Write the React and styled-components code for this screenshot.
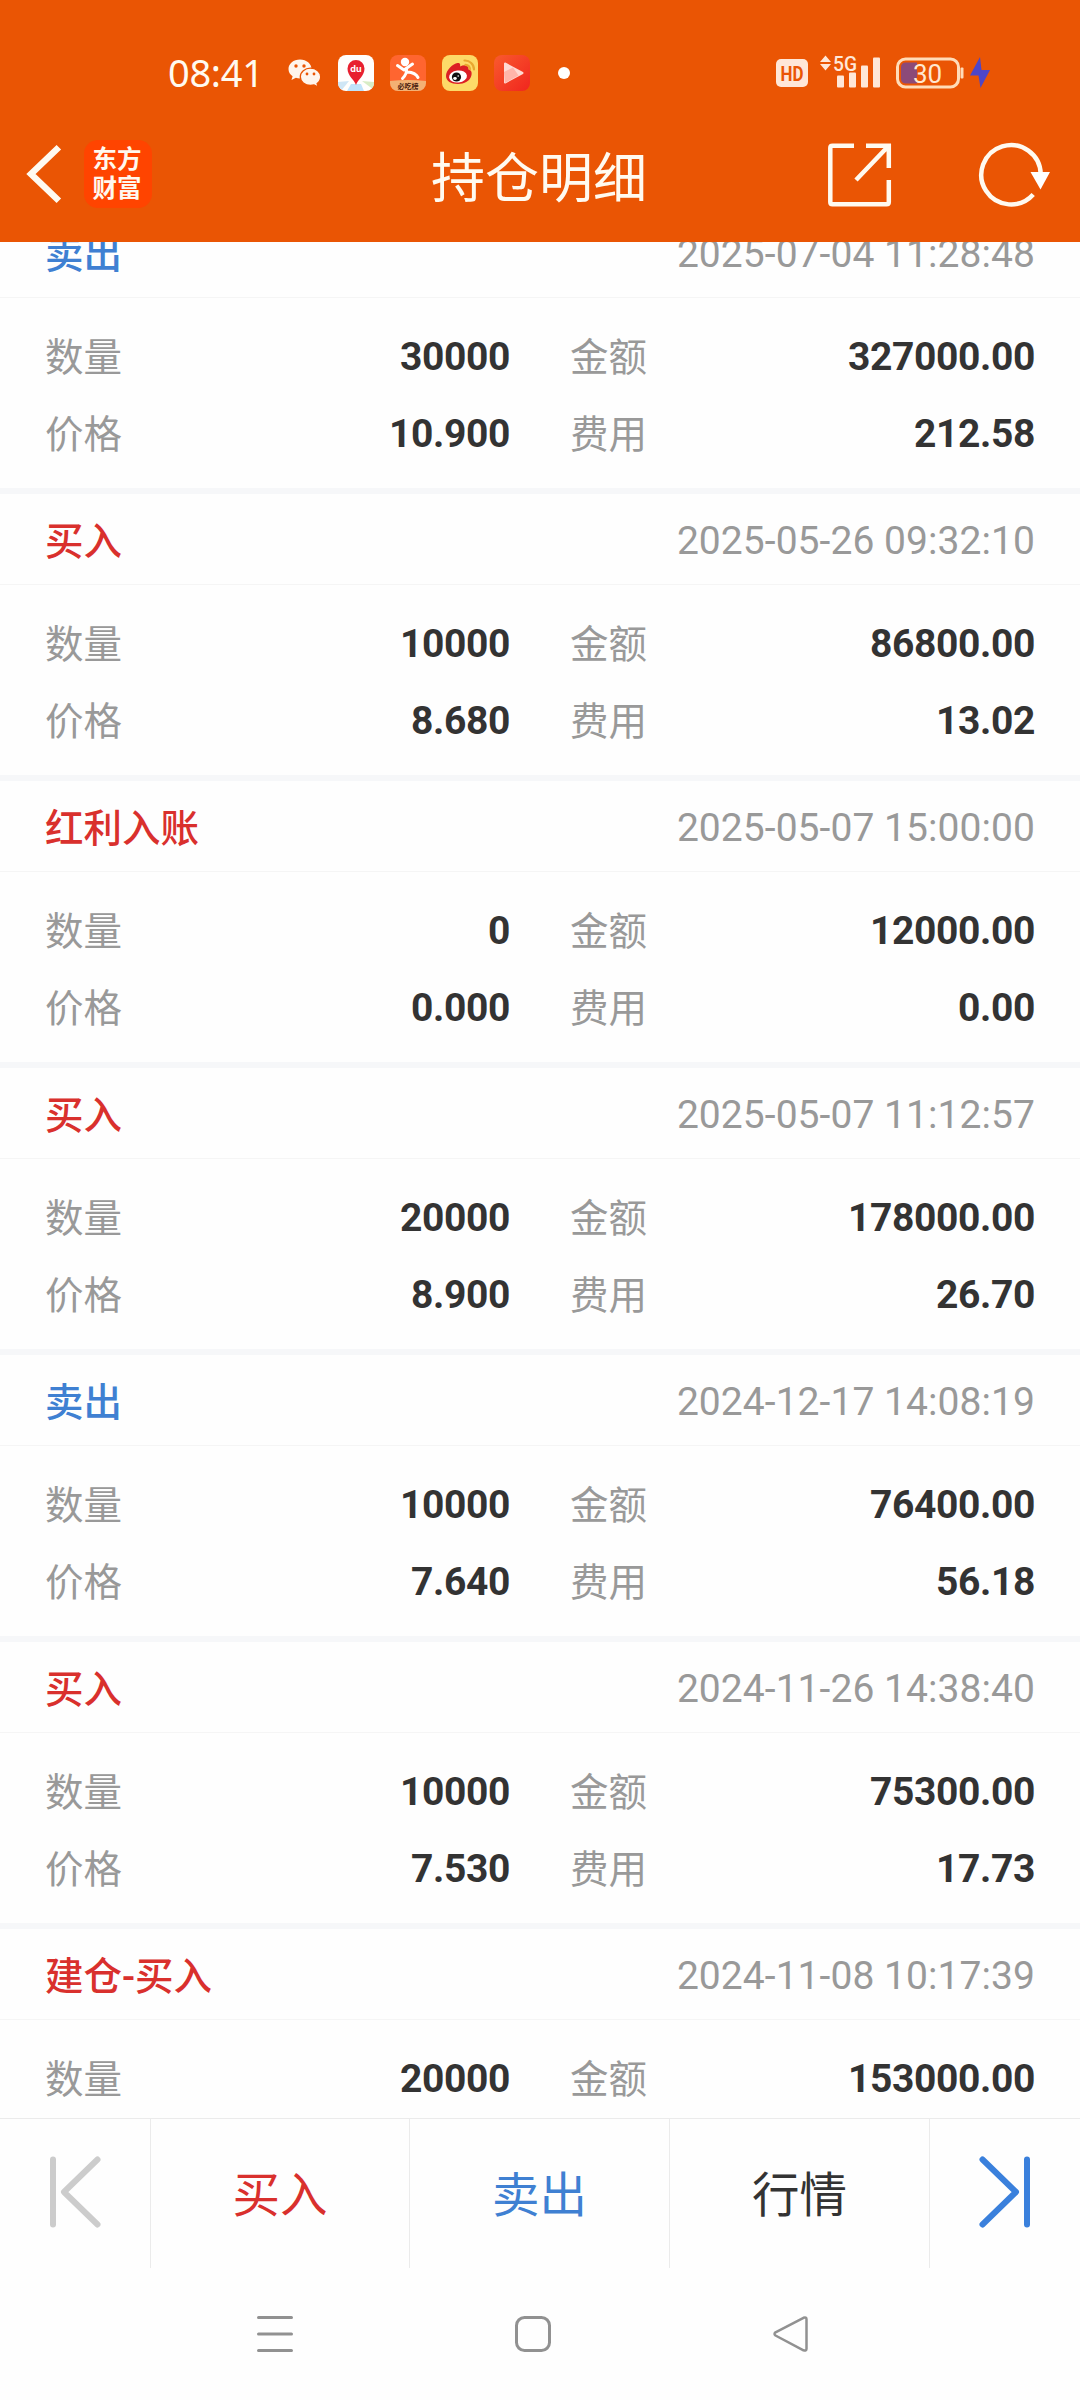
import React from 'react';
import styled, { createGlobalStyle } from 'styled-components';

const GlobalStyle = createGlobalStyle`
  body { margin: 0; background: #fefefe; }
  * { box-sizing: border-box; }
`;

const COLORS = { buy: '#d9302d', sell: '#3f80d2', text: '#333333', muted: '#999999' };

const Screen = styled.div`
  width: 1080px;
  height: 2400px;
  display: flex;
  flex-direction: column;
  overflow: hidden;
  background: #fefefe;
  font-family: Roboto, 'Noto Sans CJK SC', sans-serif;
`;

const Top = styled.header`
  flex: none;
  height: 242px;
  background: #ea5504;
  color: #fffaf0;
`;

const StatusBar = styled.div`
  height: 108px;
  padding: 37px 90px 0 168px;
  display: flex;
  justify-content: space-between;
`;

const StatusGroup = styled.div`
  display: flex;
  align-items: center;
  height: 71px;
  gap: ${(p) => p.$gap}px;
`;

const Clock = styled.span`
  width: 104px;
  padding-bottom: 1px;
  font: 400 38px/70px 'Noto Sans', sans-serif;
  letter-spacing: -0.3px;
`;

const DotWrap = styled.div`
  padding-left: 12px;
`;

const Spacer = styled.span`
  width: ${(p) => p.$w}px;
`;

const Icon = styled.svg`
  display: block;
  flex: none;
  overflow: visible;
`;

const TitleBar = styled.div`
  height: 134px;
  display: grid;
  grid-template-columns: 269px 1fr 271px;
  align-items: center;
`;

const Leading = styled.div`
  display: flex;
  align-items: center;
  gap: 24px;
  padding: 0 0 2px 26px;
`;

const Trailing = styled.div`
  display: flex;
  align-items: center;
  gap: 87px;
  padding: 0 0 1px 19px;
`;

const Logo = styled.div`
  width: 68px;
  height: 68px;
  padding: 3px 2px 0 0;
  border-radius: 14px;
  background: #ff4400;
  color: #fff8ee;
  text-align: center;
`;

const LogoLine = styled.div`
  height: 29px;
  font: 700 24.5px/29px 'Noto Sans CJK SC', sans-serif;
`;

const Title = styled.h1`
  margin: 0;
  padding-top: 10px;
  text-align: center;
  font-size: 54px;
  font-weight: 400;
  line-height: 80px;
`;

const List = styled.main`
  flex: none;
  height: 1876px;
  overflow: hidden;
`;

const Scrolled = styled.div`
  margin-top: -35px;
`;

const Card = styled.section`
  height: 287px;
  border-bottom: 6px solid #f6f7f9;
`;

const CardHead = styled.div`
  height: 91px;
  padding: 0 45px;
  display: flex;
  align-items: center;
  justify-content: space-between;
  border-bottom: 1px solid #f5f5f5;
  font-size: 39px;
`;

const Kind = styled.span`
  padding-bottom: 3px;
  color: ${(p) => COLORS[p.$tone]};
  font-size: 38.5px;
  font-weight: 500;
`;

const Time = styled.time`
  padding-top: 3px;
  color: ${COLORS.muted};
  letter-spacing: 0.06px;
`;

const Fields = styled.div`
  padding: 20px 45px 16px;
  display: grid;
  grid-template-columns: 465px 465px;
  column-gap: 60px;
  grid-auto-rows: 77px;
`;

const Field = styled.div`
  display: flex;
  align-items: center;
  justify-content: space-between;
  font-size: 39px;
`;

const Label = styled.span`
  padding-bottom: 6px;
  color: ${COLORS.muted};
  font-size: 38.5px;
  font-weight: 400;
`;

const Value = styled.span`
  color: ${COLORS.text};
  font-weight: 700;
  letter-spacing: -0.36px;
`;

const Actions = styled.nav`
  flex: none;
  height: 150px;
  display: grid;
  grid-template-columns: 151px 259px 260px 260px 150px;
  border-top: 1px solid #ebebeb;
`;

const Action = styled.div`
  display: flex;
  align-items: center;
  justify-content: center;
  padding-bottom: 4px;
  border-right: ${(p) => (p.$last ? 'none' : '1px solid #ebebeb')};
  color: ${(p) => COLORS[p.$tone]};
  font-size: 47.5px;
`;

const SystemNav = styled.footer`
  flex: 1;
  display: flex;
  justify-content: space-between;
  padding: 46px 271px 0 256px;
`;

const ACTIONS = [
  { text: '买入', tone: 'buy' },
  { text: '卖出', tone: 'sell' },
  { text: '行情', tone: 'text' },
];

const RECORDS = [
  ['卖出', 'sell', '2025-07-04 11:28:48', '30000', '327000.00', '10.900', '212.58'],
  ['买入', 'buy', '2025-05-26 09:32:10', '10000', '86800.00', '8.680', '13.02'],
  ['红利入账', 'buy', '2025-05-07 15:00:00', '0', '12000.00', '0.000', '0.00'],
  ['买入', 'buy', '2025-05-07 11:12:57', '20000', '178000.00', '8.900', '26.70'],
  ['卖出', 'sell', '2024-12-17 14:08:19', '10000', '76400.00', '7.640', '56.18'],
  ['买入', 'buy', '2024-11-26 14:38:40', '10000', '75300.00', '7.530', '17.73'],
  ['建仓-买入', 'buy', '2024-11-08 10:17:39', '20000', '153000.00'],
];
const LABELS = ['数量', '金额', '价格', '费用'];

function WeChat() {
  return (
    <Icon width="34" height="36" viewBox="0 0 34 36">
      <path d="M12 4.500C5.500 4.500 0.500 8.700 0.500 14c0 3 1.600 5.600 4.100 7.300L3.500 25l4.400-2.200c1.200.4 2.600.6 4.100.6 6.500 0 11.500-4.200 11.500-9.400S18.500 4.500 12 4.500z" fill="#fff5ec" />
      <path d="M22.500 13.200c-5.700 0-10.200 3.800-10.200 8.600s4.500 8.700 10.200 8.700c1.300 0 2.500-.2 3.600-.5l4 2-1-3.400c2.200-1.600 3.600-4 3.600-6.800 0-4.800-4.500-8.600-10.200-8.600z" fill="#fff5ec" stroke="#ea5504" strokeWidth="1.300" />
      <g fill="#ea5504">
        <circle cx="8" cy="11" r="1.700" /><circle cx="16" cy="11" r="1.700" />
        <circle cx="19" cy="19" r="1.400" /><circle cx="26" cy="19" r="1.400" />
      </g>
    </Icon>
  );
}

function MapPin() {
  return (
    <Icon width="36" height="36" viewBox="0 0 36 36">
      <clipPath id="mapClip"><rect width="36" height="36" rx="8" /></clipPath>
      <g clipPath="url(#mapClip)">
        <rect width="36" height="36" fill="#fffefc" />
        <path d="M0 27l11-1-8 10H0z" fill="#cfe6f5" />
        <path d="M13 29h10l3 7H9z" fill="#bfe3fa" />
        <path d="M24 26l12 1v8z" fill="#d7ecc5" />
      </g>
      <path d="M18 30C16.500 25 9.500 21 9.500 13.500a8.500 8.500 0 0 1 17 0C26.500 21 19.500 25 18 30z" fill="#e8202f" />
      <text x="18" y="17" textAnchor="middle" fill="#fff" fontFamily="Inter, sans-serif" fontWeight="700" fontSize="9">du</text>
    </Icon>
  );
}

function Review() {
  return (
    <Icon width="36" height="36" viewBox="0 0 36 36">
      <clipPath id="reviewClip"><rect width="36" height="36" rx="8" /></clipPath>
      <g clipPath="url(#reviewClip)">
        <rect width="36" height="36" fill="#ff6530" />
        <path d="M0 26q18-2 36 0v10H0z" fill="#f3b174" />
      </g>
      <circle cx="15" cy="7" r="4.200" fill="#fff" />
      <path d="M7.500 10.500l6.500 4.500 8.500-6M16.500 14.500q.5 4.500-4 9M17.500 17q8 .5 10.500 5.500" fill="none" stroke="#fff" strokeWidth="3" strokeLinecap="round" strokeLinejoin="round" />
      <text x="18" y="33.500" textAnchor="middle" fill="#4a1d10" fontFamily="Noto Sans CJK SC, sans-serif" fontWeight="700" fontSize="7">必吃榜</text>
    </Icon>
  );
}

function Weibo() {
  return (
    <Icon width="36" height="36" viewBox="0 0 36 36">
      <rect width="36" height="36" rx="8" fill="#fdda68" />
      <path d="M4 21C4 15 11 8.500 15.500 8c3-.2 3 2 2.500 3.500 4-2 9-2 8.500 3 3 .8 3.500 3 3 5.500C28.500 26 22 29 16 29 9 29 4 26 4 21z" fill="#dc1f24" />
      <ellipse cx="16" cy="21.500" rx="9" ry="6" fill="#fff" transform="rotate(-7 16 21.500)" />
      <circle cx="14.500" cy="22" r="4.600" fill="#111" />
      <ellipse cx="13" cy="23.500" rx="1.800" ry="1.400" fill="#fff" /><circle cx="16.200" cy="21" r="0.800" fill="#fff" />
      <path d="M22.500 5.500a9 9 0 0 1 9.500 9M23.500 9.800a5 5 0 0 1 4.500 4.400" fill="none" stroke="#e9a72f" strokeWidth="2.200" strokeLinecap="round" />
    </Icon>
  );
}

function Video() {
  return (
    <Icon width="36" height="36" viewBox="0 0 36 36">
      <linearGradient id="videoFill" x1="0" y1="0" x2="1" y2="1">
        <stop offset="0" stopColor="#f95a2e" /><stop offset="1" stopColor="#f0251e" />
      </linearGradient>
      <rect width="36" height="36" rx="8" fill="url(#videoFill)" />
      <path d="M11 8.500v19L28.500 18z" fill="#ffd9d2" stroke="#ffd9d2" strokeWidth="2" strokeLinejoin="round" />
      <path d="M10 17l9-4.500 5.500 8L11 28z" fill="#ff9d90" opacity=".6" />
    </Icon>
  );
}

function Dot() {
  return <Icon width="12" height="12" viewBox="0 0 12 12"><circle cx="6" cy="6" r="6" fill="#fff" /></Icon>;
}

function HdBadge() {
  return (
    <Icon width="32" height="28" viewBox="0 0 32 28">
      <rect width="32" height="28" rx="5" fill="#ffe7d8" />
      <text x="16" y="21.500" textAnchor="middle" textLength="23" lengthAdjust="spacingAndGlyphs" fill="#ea5504" fontFamily="Roboto, sans-serif" fontWeight="700" fontSize="21">HD</text>
    </Icon>
  );
}

function Signal() {
  return (
    <Icon width="60" height="34" viewBox="820 55.500 60 34">
      <g fill="#ffe7d8">
        <path d="M820 61.500h11L825.500 55zM820 63.500h11L825.500 70z" />
        <rect x="837" y="75" width="7" height="12" rx="1" />
        <rect x="849" y="72" width="7" height="15" rx="1" />
        <rect x="861" y="65" width="7" height="22" rx="1" />
        <rect x="873" y="57" width="7" height="30" rx="1" />
        <text x="833" y="70.500" textLength="24" lengthAdjust="spacingAndGlyphs" fontFamily="Roboto, sans-serif" fontWeight="500" fontSize="21">5G</text>
      </g>
    </Icon>
  );
}

function Battery() {
  return (
    <Icon width="68" height="34" viewBox="896 55.500 68 34">
      <rect x="897.500" y="58.500" width="61" height="28" rx="8" fill="none" stroke="#ffdcb8" strokeWidth="3" />
      <rect x="960.500" y="67" width="3" height="11" rx="1" fill="#ffdcb8" />
      <path d="M917 62h-11q-5 0-5 5v11q0 5 5 5h11z" fill="#8c4a78" />
      <text x="927.500" y="82" textAnchor="middle" fill="#ffe7d0" fontFamily="Roboto, sans-serif" fontSize="26" textLength="29">30</text>
    </Icon>
  );
}

function Bolt() {
  return (
    <Icon width="20" height="32" viewBox="0 0 20 32">
      <path d="M10 0L0 18.500h8.500L10.500 31 20 13h-8.500z" fill="#4e46c8" />
    </Icon>
  );
}

function Back() {
  return (
    <Icon width="34" height="56" viewBox="0 0 34 56">
      <path d="M30.500 3.500L5 28l25.500 24.500" fill="none" stroke="#fffaf0" strokeWidth="6.500" strokeLinecap="square" />
    </Icon>
  );
}

function Share() {
  return (
    <Icon width="64" height="64" viewBox="0 0 64 64">
      <g fill="none" stroke="#fffaf0" strokeWidth="4.500">
        <path d="M26 2.800H4.500Q2.300 2.800 2.300 5v54q0 2.300 2.200 2.300h54q2.300 0 2.300-2.300V37" />
        <path d="M38 2.800h22.800V25M60 3.500L28 37" />
      </g>
    </Icon>
  );
}

function Refresh() {
  return (
    <Icon width="72" height="64" viewBox="979 142 72 64">
      <path d="M1033.200 193.500A29.700 29.700 0 1 1 1040.700 173" fill="none" stroke="#fffaf0" strokeWidth="4.500" />
      <path d="M1030.500 171h19.500l-9.500 17.500z" fill="#fff" />
    </Icon>
  );
}

function Skip({ color, flip }) {
  return (
    <Icon width="52" height="72" viewBox="0 0 52 72">
      <g transform={flip ? 'translate(52 0) scale(-1 1)' : undefined} fill="none" stroke={color} strokeWidth="6" strokeLinecap="round" strokeLinejoin="round">
        <path d="M4 3.500v65M48.500 3.500L15 36l33.500 32.500" />
      </g>
    </Icon>
  );
}

function SystemIcon({ children }) {
  return (
    <Icon width="38" height="38" viewBox="0 0 38 38" fill="none" stroke="#919191" strokeWidth="3" strokeLinecap="round" strokeLinejoin="round">
      {children}
    </Icon>
  );
}

function Record({ data }) {
  const [kind, tone, time, ...values] = data;
  return (
    <Card>
      <CardHead>
        <Kind $tone={tone}>{kind}</Kind>
        <Time>{time}</Time>
      </CardHead>
      <Fields>
        {values.map((value, i) => (
          <Field key={LABELS[i]}>
            <Label>{LABELS[i]}</Label>
            <Value>{value}</Value>
          </Field>
        ))}
      </Fields>
    </Card>
  );
}

export default function App() {
  return (
    <>
      <GlobalStyle />
      <Screen>
        <Top>
          <StatusBar>
            <StatusGroup $gap={16}>
              <Clock>08:41</Clock>
              <WeChat />
              <MapPin />
              <Review />
              <Weibo />
              <Video />
              <DotWrap><Dot /></DotWrap>
            </StatusGroup>
            <StatusGroup $gap={0}>
              <HdBadge />
              <Spacer $w={12} />
              <Signal />
              <Spacer $w={16} />
              <Battery />
              <Spacer $w={6} />
              <Bolt />
            </StatusGroup>
          </StatusBar>
          <TitleBar>
            <Leading>
              <Back />
              <Logo>
                <LogoLine>东方</LogoLine>
                <LogoLine>财富</LogoLine>
              </Logo>
            </Leading>
            <Title>持仓明细</Title>
            <Trailing>
              <Share />
              <Refresh />
            </Trailing>
          </TitleBar>
        </Top>
        <List>
          <Scrolled>
            {RECORDS.map((r) => <Record key={r[2]} data={r} />)}
          </Scrolled>
        </List>
        <Actions>
          <Action $tone="muted"><Skip color="#cccccc" /></Action>
          {ACTIONS.map((a) => <Action key={a.text} $tone={a.tone}>{a.text}</Action>)}
          <Action $tone="sell" $last><Skip color="#3a80dc" flip /></Action>
        </Actions>
        <SystemNav>
          <SystemIcon><path d="M2.500 3.500h33M2.500 20h33M2.500 36.500h33" /></SystemIcon>
          <SystemIcon><rect x="2.500" y="3.500" width="33" height="33" rx="8" /></SystemIcon>
          <SystemIcon><path d="M4.500 18.300L32.500 3.800q3-1 3 1.500v29.500q0 2.500-3 1.500L4.500 21.500q-2-1.600 0-3.200z" strokeWidth="2.500" /></SystemIcon>
        </SystemNav>
      </Screen>
    </>
  );
}
